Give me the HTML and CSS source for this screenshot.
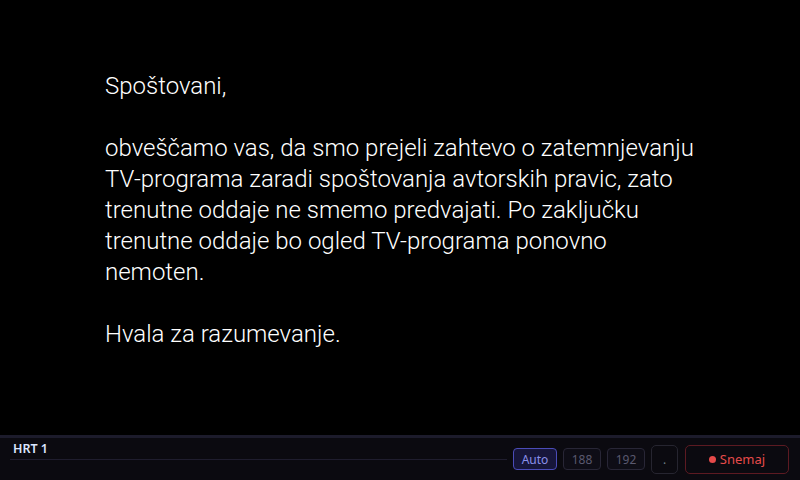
FILE: index.html
```html
<!DOCTYPE html>
<html lang="sl">
<head>
<meta charset="utf-8">
<link rel="stylesheet" href="styles.css">
</head>
<body>
<main class="screen">
  <div class="notice">
    <p>Spoštovani,</p>
    <p>obveščamo vas, da smo prejeli zahtevo o zatemnjevanju TV-programa zaradi spoštovanja avtorskih pravic, zato trenutne oddaje ne smemo predvajati. Po zaključku trenutne oddaje bo ogled TV-programa ponovno nemoten.</p>
    <p>Hvala za razumevanje.</p>
  </div>
</main>
<footer class="bar">
  <div class="channel">
    <div class="channel-name">HRT 1</div>
    <div class="channel-line"></div>
  </div>
  <div class="controls">
    <button class="q q-active">Auto</button>
    <button class="q">188</button>
    <button class="q">192</button>
    <button class="big dot-btn">.</button>
    <button class="big rec"><span class="rec-dot"></span>Snemaj</button>
  </div>
</footer>
</body>
</html>
```
FILE: styles.css
```css
html, body {
  margin: 0;
  padding: 0;
  background: #000;
}
body {
  width: 800px;
  height: 480px;
  display: flex;
  flex-direction: column;
  overflow: hidden;
}
.screen {
  flex: 1;
  padding: 71px 0 0 105px;
  box-sizing: border-box;
}
.notice {
  width: 602px;
  font-family: Roboto, "Liberation Sans", sans-serif;
  font-weight: 300;
  font-size: 24px;
  line-height: 31px;
  color: #fff;
}
.notice p {
  margin: 0 0 31px 0;
}
.bar {
  height: 45px;
  box-sizing: border-box;
  border-top: 3px solid #1c1b2b;
  background: #0b0a10;
  display: flex;
  align-items: center;
  gap: 6px;
  padding: 0 11px 0 10px;
}
.channel {
  flex: 1;
  align-self: stretch;
  padding-top: 4px;
}
.channel-name {
  font-family: "Noto Sans", "Open Sans", sans-serif;
  font-weight: 600;
  font-size: 12.5px;
  line-height: 14px;
  color: #dbe6ff;
  padding-left: 3px;
}
.channel-line {
  height: 1px;
  background: #1f1d2e;
  margin-top: 3px;
}
.controls {
  display: flex;
  align-items: center;
  gap: 6px;
}
button {
  font-family: "Noto Sans", "Open Sans", sans-serif;
  margin: 0;
  padding: 0;
  box-sizing: border-box;
  cursor: pointer;
}
.q {
  height: 22px;
  width: 38px;
  border-radius: 4px;
  border: 1px solid #282636;
  background: #0e0d16;
  color: #5a596f;
  font-size: 12px;
}
.q-active {
  width: 44px;
  border-color: #4b4cb8;
  background: #17163a;
  color: #8a90ea;
}
.big {
  height: 29px;
  border-radius: 5px;
  background: #0b0a10;
}
.dot-btn {
  width: 27px;
  border: 1px solid #262530;
  color: #6f8088;
  font-size: 12px;
  margin-right: 1px;
}
.rec {
  width: 104px;
  border: 1px solid #5c1a22;
  color: #e64a4a;
  font-size: 13px;
  display: flex;
  align-items: center;
  justify-content: center;
  gap: 4px;
}
.rec-dot {
  width: 7px;
  height: 7px;
  border-radius: 50%;
  background: #e64a4a;
}
```
